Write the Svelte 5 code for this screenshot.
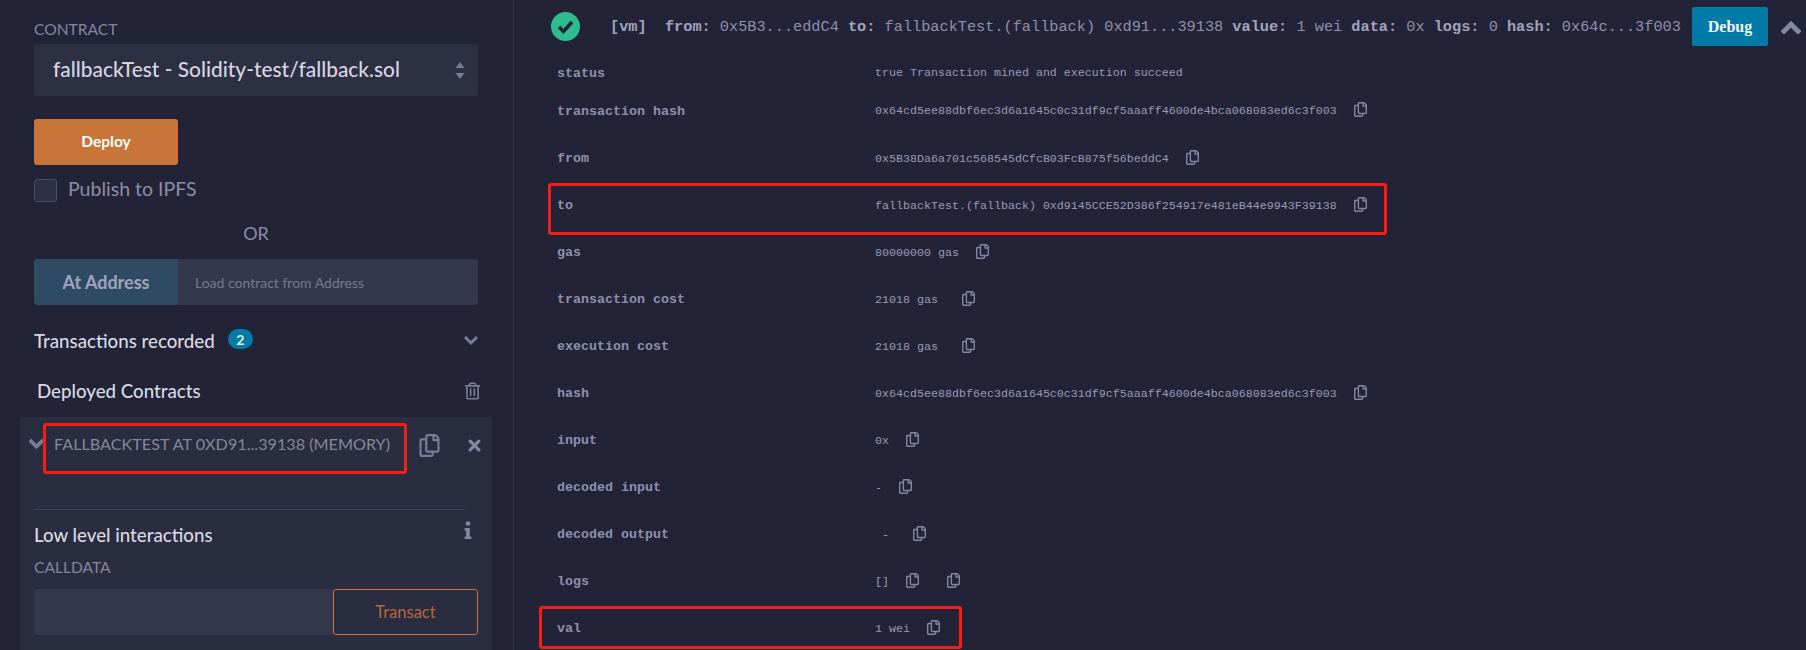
<script>
  const copyPath = "M433.941 65.941l-51.882-51.882A48 48 0 0 0 348.118 0H176c-26.51 0-48 21.49-48 48v48H48c-26.51 0-48 21.49-48 48v320c0 26.51 21.49 48 48 48h224c26.51 0 48-21.49 48-48v-48h80c26.51 0 48-21.49 48-48V99.882a48 48 0 0 0-14.059-33.941zM266 464H54a6 6 0 0 1-6-6V150a6 6 0 0 1 6-6h74v224c0 26.51 21.49 48 48 48h96v42a6 6 0 0 1-6 6zm128-96H182a6 6 0 0 1-6-6V54a6 6 0 0 1 6-6h106v88c0 13.255 10.745 24 24 24h88v202a6 6 0 0 1-6 6zm6-256h-64V48h9.632c1.591 0 3.117.632 4.243 1.757l48.368 48.368a6 6 0 0 1 1.757 4.243V112z";
  const trashPath = "M268 416h24a12 12 0 0 0 12-12V188a12 12 0 0 0-12-12h-24a12 12 0 0 0-12 12v216a12 12 0 0 0 12 12zM432 80h-82.41l-34-56.7A48 48 0 0 0 274.41 0H173.59a48 48 0 0 0-41.16 23.3L98.41 80H16A16 16 0 0 0 0 96v16a16 16 0 0 0 16 16h16v336a48 48 0 0 0 48 48h288a48 48 0 0 0 48-48V128h16a16 16 0 0 0 16-16V96a16 16 0 0 0-16-16zM171.84 50.91A6 6 0 0 1 177 48h94a6 6 0 0 1 5.15 2.91L293.61 80H154.39zM368 464H80V128h288zm-212-48h24a12 12 0 0 0 12-12V188a12 12 0 0 0-12-12h-24a12 12 0 0 0-12 12v216a12 12 0 0 0 12 12z";
  const rows = [
    { k: "status", v: "true Transaction mined and execution succeed", cls: "short", icons: 0 },
    { k: "transaction hash", v: "0x64cd5ee88dbf6ec3d6a1645c0c31df9cf5aaaff4600de4bca068083ed6c3f003", cls: "short gap", icons: 1 },
    { k: "from", v: "0x5B38Da6a701c568545dCfcB03FcB875f56beddC4", icons: 1 },
    { k: "to", v: "fallbackTest.(fallback) 0xd9145CCE52D386f254917e481eB44e9943F39138", icons: 1, box: "box-to" },
    { k: "gas", v: "80000000 gas", icons: 1 },
    { k: "transaction cost", v: "21018 gas ", icons: 1 },
    { k: "execution cost", v: "21018 gas ", icons: 1 },
    { k: "hash", v: "0x64cd5ee88dbf6ec3d6a1645c0c31df9cf5aaaff4600de4bca068083ed6c3f003", icons: 1 },
    { k: "input", v: "0x", icons: 1 },
    { k: "decoded input", v: "-", icons: 1 },
    { k: "decoded output", v: " - ", icons: 1 },
    { k: "logs", v: "[]", icons: 2 },
    { k: "val", v: "1 wei", icons: 1, box: "box-val" }
  ];
</script>

<div class="page">
  <aside class="side">
    <div class="label first">CONTRACT</div>
    <div class="select">
      <span>fallbackTest - Solidity-test/fallback.sol</span>
      <svg class="updown" viewBox="0 0 10 17"><path d="M5 0l4.500 6h-9zM5 17l-4.500-6h9z" /></svg>
    </div>
    <button class="deploy">Deploy</button>
    <div class="publish"><span class="check"></span><span class="pubtext">Publish to IPFS</span></div>
    <div class="or">OR</div>
    <div class="ataddress">
      <button class="at">At Address</button>
      <div class="addr">Load contract from Address</div>
    </div>
    <div class="tx">
      <span class="title">Transactions recorded</span>
      <span class="badge">2</span>
      <svg class="chev" viewBox="0 0 14 10"><path d="M2 2l5 5 5-5" /></svg>
    </div>
    <div class="deployed">
      <span class="title">Deployed Contracts</span>
      <svg class="trash" viewBox="0 0 448 512"><path d={trashPath} /></svg>
    </div>
    <section class="card">
      <div class="card-head">
        <svg class="chev small" viewBox="0 0 14 10"><path d="M2 2l5 5 5-5" /></svg>
        <span class="instance">FALLBACKTEST AT 0XD91...39138 (MEMORY)</span>
        <svg class="bigcopy" viewBox="0 0 448 512"><path d={copyPath} /></svg>
        <svg class="times" viewBox="0 0 12 12"><path d="M2 2l8 8M10 2l-8 8" /></svg>
        <span class="redbox box-inst"></span>
      </div>
      <div class="low">
        <div class="low-title">
          <span class="title">Low level interactions</span>
          <svg class="info" viewBox="0 0 8 18"><circle cx="4" cy="2.500" r="2.300" /><path d="M.6 7h5.200v8.400h1.600V18H.6v-2.600h1.500V9.600H.6z" /></svg>
        </div>
        <div class="label">CALLDATA</div>
        <div class="calldata">
          <div class="cinput"></div>
          <button class="transact">Transact</button>
        </div>
      </div>
    </section>
  </aside>

  <main class="log">
    <header class="head">
      <svg class="ok" viewBox="0 0 29 29"><circle cx="14.500" cy="14.500" r="14.500" /><path d="M8 15l4.500 4.500L21 10" /></svg>
      <div class="summary"><b>[vm]</b>{"  "}<b>from:</b> 0x5B3...eddC4 <b>to:</b> fallbackTest.(fallback) 0xd91...39138 <b>value:</b> 1 wei <b>data:</b> 0x <b>logs:</b> 0 <b>hash:</b> 0x64c...3f003</div>
      <button class="debug">Debug</button>
      <svg class="chev up" viewBox="0 0 14 10"><path d="M2 8l5-5 5 5" /></svg>
    </header>
    {#each rows as r}
      <div class="row {r.cls ?? ''}">
        <div class="k">{r.k}</div>
        <div class="v">{r.v}</div>
        {#each Array(r.icons) as _, i}
          <svg class="copy" class:second={i > 0} viewBox="0 0 448 512"><path d={copyPath} /></svg>
        {/each}
        {#if r.box}<span class="redbox {r.box}"></span>{/if}
      </div>
    {/each}
  </main>
</div>

<style>
  :global(body) { margin: 0; background: #222336; }
  .page {
    display: flex; width: 1806px; height: 650px; overflow: hidden;
    background: #222336; color: #a2a3bd;
    font-family: "Lato", "Noto Sans", sans-serif;
  }
  button { font-family: inherit; border: 0; padding: 0; }
  .side { box-sizing: border-box; width: 514px; height: 650px; flex: none; padding: 0 35px 0 34px; border-right: 1px solid #2d2f44; }
  .label { font-size: 15.600px; line-height: 18px; color: #8486a0; }
  .label.first { margin-top: 20px; }
  .select {
    display: flex; align-items: center; justify-content: space-between;
    height: 52px; margin-top: 6px; padding: 0 13px 0 19px; box-sizing: border-box;
    background: #2d2f43; border-radius: 3px; color: #d5d6e2; font-size: 20.900px; font-weight: 500;
  }
  .select span { padding-bottom: 3px; }
  .updown { width: 10px; height: 17px; fill: #7a7c98; }
  .deploy { display: block; width: 144px; height: 46px; margin-top: 23px; padding-bottom: 3px; background: #c97539; color: #fff; border-radius: 3px; font-size: 15.500px; font-weight: 700; }
  .publish { display: flex; align-items: center; gap: 11px; margin-top: 14px; height: 23px; font-size: 19.500px; color: #8c8ea9; }
  .pubtext { padding-bottom: 4px; }
  .check { box-sizing: border-box; width: 23px; height: 23px; background: #2d2f43; border: 1px solid #4b4d66; border-radius: 3px; }
  .or { margin-top: 20px; text-align: center; font-size: 18px; line-height: 22px; color: #8c8ea9; }
  .ataddress { display: flex; height: 46px; margin-top: 15px; border-radius: 3px; overflow: hidden; }
  .at { width: 144px; background: #2f4a63; color: #a2a3bd; font-size: 18px; font-weight: 700; }
  .addr { flex: 1; display: flex; align-items: center; padding-left: 17px; background: #35384c; color: #777990; font-size: 14px; }
  .title { color: #d8d9e4; font-size: 18.700px; font-weight: 500; }
  .tx { display: flex; align-items: center; height: 24px; margin-top: 24px; position: relative; }
  .badge { margin: -4px 0 0 13px; width: 25px; height: 20px; border-radius: 10px; background: #007aa6; color: #e8f1f5; font-size: 14px; font-weight: 700; display: flex; align-items: center; justify-content: center; }
  .chev { fill: none; stroke: #7a7c98; stroke-width: 3; stroke-linecap: square; }
  .tx .chev { width: 14px; height: 10px; margin-left: auto; }
  .deployed { display: flex; align-items: center; justify-content: space-between; height: 24px; margin: 26px -2px 0 3px; }
  .trash { width: 15px; height: 18px; fill: #7a7c98; }
  .card { margin: 14px -14px 0 -14px; padding: 0 14px; background: #2a2c3f; border-radius: 3px; height: 240px; }
  .card-head { position: relative; height: 93px; box-sizing: border-box; display: flex; align-items: flex-start; border-bottom: 1px solid #3f4159; margin-right: 13px; }
  .chev.small { position: absolute; left: -5px; top: 22px; width: 15px; height: 11px; stroke-width: 3.500; }
  .instance { position: absolute; left: 20px; top: 18px; font-size: 16.200px; line-height: 18px; color: #868899; white-space: nowrap; }
  .bigcopy { position: absolute; left: 385px; top: 17px; width: 21px; height: 23px; fill: #7a7c98; }
  .times { position: absolute; left: 434px; top: 22px; width: 13px; height: 13px; fill: none; stroke: #8587a3; stroke-width: 3; stroke-linecap: round; }
  .low-title { position: relative; height: 26px; margin-top: 12px; }
  .low-title .title { line-height: 26px; }
  .info { position: absolute; right: 6px; top: -1px; width: 8px; height: 18px; fill: #8587a3; }
  .low .label { margin-top: 10px; }
  .calldata { display: flex; height: 46px; margin-top: 13px; }
  .cinput { width: 299px; background: #35384c; border-radius: 3px 0 0 3px; }
  .transact { box-sizing: border-box; width: 145px; background: transparent; border: 1px solid #c97539; border-radius: 3px; color: #b5693a; font-size: 16.500px; }
  .redbox { position: absolute; box-sizing: border-box; border: 3px solid #f31f15; border-radius: 3px; pointer-events: none; }
  .box-inst { left: 9px; top: 6px; width: 364px; height: 51px; }
  .log { flex: 1; min-width: 0; }
  .head { display: flex; align-items: center; height: 53px; margin-bottom: 1px; padding-left: 37px; }
  .ok { width: 29px; height: 29px; flex: none; margin-right: 30px; }
  .ok circle { fill: #2fbc8c; }
  .ok path { fill: none; stroke: #222336; stroke-width: 3.500; }
  .summary { white-space: pre; width: 1082px; font: 15.250px/20px "Liberation Mono", monospace; color: #8f90ab; }
  .summary b { color: #a2a3bd; }
  .debug { width: 76px; height: 39px; background: #007aa6; color: #f2f4f8; border-radius: 2px; font: bold 16px "Liberation Serif", serif; }
  .chev.up { width: 20px; height: 14px; margin-left: 13px; stroke: #8587a3; stroke-width: 3.500; }
  .row { position: relative; display: flex; align-items: center; height: 47px; padding-left: 43px; white-space: pre; }
  .row.short { height: 38px; }
  .row.gap { margin-bottom: 5px; }
  .k { width: 318px; flex: none; font: bold 13.333px "Liberation Mono", monospace; color: #8f90ab; }
  .v { font: 11.667px "Liberation Mono", monospace; color: #9a9bb5; }
  .copy { width: 13px; height: 15px; margin-left: 17px; margin-top: -3px; fill: #8486a3; }
  .copy.second { margin-left: 28px; }
  .box-to { left: 34px; top: 1px; width: 839px; height: 52px; }
  .box-val { left: 25px; top: 1px; width: 423px; height: 43px; }
</style>
